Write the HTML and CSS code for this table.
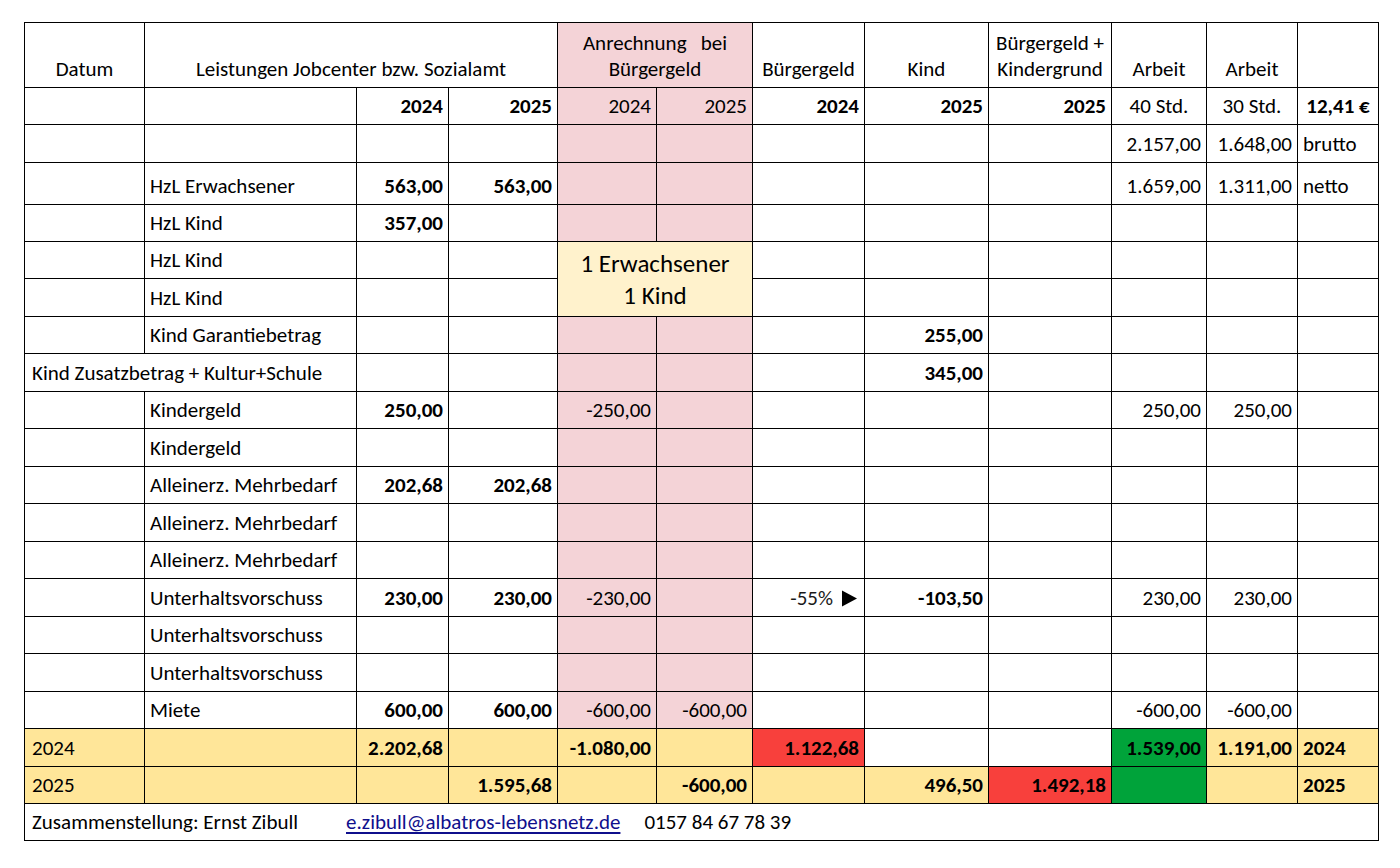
FILE: index.html
```html
<!DOCTYPE html>
<html lang="de">
<head>
<meta charset="utf-8">
<title>Leistungen Jobcenter bzw. Sozialamt</title>
<link rel="stylesheet" href="styles.css">
</head>
<body>
<table class="sheet">
  <colgroup>
    <col class="w120"><col class="w212"><col class="w92"><col class="w109"><col class="w99"><col class="w96">
    <col class="w112"><col class="w124"><col class="w123"><col class="w95"><col class="w91"><col class="w81">
  </colgroup>
  <tr class="h65 head">
    <td>Datum</td>
    <td colspan="3">Leistungen Jobcenter bzw. Sozialamt</td>
    <td colspan="2" class="pink">Anrechnung&nbsp;&nbsp; bei<br>Bürgergeld</td>
    <td>Bürgergeld</td>
    <td>Kind</td>
    <td>Bürgergeld +<br>Kindergrund</td>
    <td>Arbeit</td>
    <td>Arbeit</td>
    <td></td>
  </tr>
  <tr class="h37">
    <td></td><td></td>
    <td class="num b">2024</td><td class="num b">2025</td>
    <td class="num pink">2024</td><td class="num pink">2025</td>
    <td class="num b">2024</td><td class="num b">2025</td><td class="num b">2025</td>
    <td class="ctr">40 Std.</td><td class="ctr">30 Std.</td><td class="ctr b">12,41 €</td>
  </tr>
  <tr class="h38">
    <td></td><td></td><td></td><td></td>
    <td class="pink"></td><td class="pink"></td>
    <td></td><td></td><td></td>
    <td class="num">2.157,00</td><td class="num">1.648,00</td><td>brutto</td>
  </tr>
  <tr class="h42">
    <td></td><td>HzL Erwachsener</td>
    <td class="num b">563,00</td><td class="num b">563,00</td>
    <td class="pink"></td><td class="pink"></td>
    <td></td><td></td><td></td>
    <td class="num">1.659,00</td><td class="num">1.311,00</td><td>netto</td>
  </tr>
  <tr class="h37">
    <td></td><td>HzL Kind</td>
    <td class="num b">357,00</td><td></td>
    <td class="pink"></td><td class="pink"></td>
    <td></td><td></td><td></td><td></td><td></td><td></td>
  </tr>
  <tr class="h37">
    <td></td><td>HzL Kind</td><td></td><td></td>
    <td colspan="2" rowspan="2" class="note">1 Erwachsener<br>1 Kind</td>
    <td></td><td></td><td></td><td></td><td></td><td></td>
  </tr>
  <tr class="h38">
    <td></td><td>HzL Kind</td><td></td><td></td>
    <td></td><td></td><td></td><td></td><td></td><td></td>
  </tr>
  <tr class="h37">
    <td></td><td>Kind Garantiebetrag</td><td></td><td></td>
    <td class="pink"></td><td class="pink"></td>
    <td></td><td class="num b">255,00</td><td></td><td></td><td></td><td></td>
  </tr>
  <tr class="h38">
    <td colspan="2" class="first">Kind Zusatzbetrag + Kultur+Schule</td><td></td><td></td>
    <td class="pink"></td><td class="pink"></td>
    <td></td><td class="num b">345,00</td><td></td><td></td><td></td><td></td>
  </tr>
  <tr class="h37">
    <td></td><td>Kindergeld</td>
    <td class="num b">250,00</td><td></td>
    <td class="num pink">-250,00</td><td class="pink"></td>
    <td></td><td></td><td></td>
    <td class="num">250,00</td><td class="num">250,00</td><td></td>
  </tr>
  <tr class="h38">
    <td></td><td>Kindergeld</td><td></td><td></td>
    <td class="pink"></td><td class="pink"></td>
    <td></td><td></td><td></td><td></td><td></td><td></td>
  </tr>
  <tr class="h37">
    <td></td><td>Alleinerz. Mehrbedarf</td>
    <td class="num b">202,68</td><td class="num b">202,68</td>
    <td class="pink"></td><td class="pink"></td>
    <td></td><td></td><td></td><td></td><td></td><td></td>
  </tr>
  <tr class="h38">
    <td></td><td>Alleinerz. Mehrbedarf</td><td></td><td></td>
    <td class="pink"></td><td class="pink"></td>
    <td></td><td></td><td></td><td></td><td></td><td></td>
  </tr>
  <tr class="h37">
    <td></td><td>Alleinerz. Mehrbedarf</td><td></td><td></td>
    <td class="pink"></td><td class="pink"></td>
    <td></td><td></td><td></td><td></td><td></td><td></td>
  </tr>
  <tr class="h38">
    <td></td><td>Unterhaltsvorschuss</td>
    <td class="num b">230,00</td><td class="num b">230,00</td>
    <td class="num pink">-230,00</td><td class="pink"></td>
    <td class="num"><span class="light">-55%</span><svg class="arrow" width="17" height="17" viewBox="0 0 17 17" aria-hidden="true"><polygon points="1,0.5 16,8.5 1,16.5" fill="#000"/></svg></td>
    <td class="num b">-103,50</td><td></td>
    <td class="num">230,00</td><td class="num">230,00</td><td></td>
  </tr>
  <tr class="h37">
    <td></td><td>Unterhaltsvorschuss</td><td></td><td></td>
    <td class="pink"></td><td class="pink"></td>
    <td></td><td></td><td></td><td></td><td></td><td></td>
  </tr>
  <tr class="h38">
    <td></td><td>Unterhaltsvorschuss</td><td></td><td></td>
    <td class="pink"></td><td class="pink"></td>
    <td></td><td></td><td></td><td></td><td></td><td></td>
  </tr>
  <tr class="h37">
    <td></td><td>Miete</td>
    <td class="num b">600,00</td><td class="num b">600,00</td>
    <td class="num pink">-600,00</td><td class="num pink">-600,00</td>
    <td></td><td></td><td></td>
    <td class="num">-600,00</td><td class="num">-600,00</td><td></td>
  </tr>
  <tr class="h38">
    <td class="yel first">2024</td><td class="yel"></td>
    <td class="yel num b">2.202,68</td><td class="yel"></td>
    <td class="yel num b">-1.080,00</td><td class="yel"></td>
    <td class="red num b">1.122,68</td>
    <td></td><td></td>
    <td class="green num b">1.539,00</td><td class="yel num b">1.191,00</td><td class="yel b">2024</td>
  </tr>
  <tr class="h37">
    <td class="yel first">2025</td><td class="yel"></td>
    <td class="yel"></td><td class="yel num b">1.595,68</td>
    <td class="yel"></td><td class="yel num b">-600,00</td>
    <td class="yel"></td>
    <td class="yel num b">496,50</td><td class="red num b">1.492,18</td>
    <td class="green"></td><td class="yel"></td><td class="yel b">2025</td>
  </tr>
  <tr class="h37">
    <td colspan="12" class="foot">
      <div class="foot-line">
        <span class="author">Zusammenstellung: Ernst Zibull</span>
        <a class="mail" href="mailto:e.zibull@albatros-lebensnetz.de">e.zibull@albatros-lebensnetz.de</a>
        <span class="phone">0157 84 67 78 39</span>
      </div>
    </td>
  </tr>
</table>
</body>
</html>
```

FILE: styles.css
```css
html, body {
  margin: 0;
  background: #ffffff;
}

body {
  padding: 22px 0 0 24px;
  font-family: Carlito, Calibri, Lato, "Open Sans", sans-serif;
  font-size: 21px;
  color: #000000;
}

.sheet {
  border-collapse: collapse;
  table-layout: fixed;
  width: 1355px;
}

.w120 { width: 120px; }
.w212 { width: 212px; }
.w92  { width: 92px; }
.w109 { width: 109px; }
.w99  { width: 99px; }
.w96  { width: 96px; }
.w112 { width: 112px; }
.w124 { width: 124px; }
.w123 { width: 123px; }
.w95  { width: 95px; }
.w91  { width: 91px; }
.w81  { width: 81px; }

.h65 { height: 65px; }
.h42 { height: 42px; }
.h38 { height: 38px; }
.h37 { height: 37px; }

.sheet td {
  border: 1px solid #000000;
  padding: 0 5px 6px 5px;
  vertical-align: bottom;
  line-height: 24px;
  white-space: nowrap;
  overflow: hidden;
}

.head td {
  text-align: center;
  line-height: 26px;
  padding-bottom: 5px;
}

.sheet td.first {
  padding-left: 7px;
}

.num { text-align: right; }
.ctr { text-align: center; }
.b { font-weight: 700; }

.pink { background: #f4d3d7; }
.yel { background: #ffe699; }
.red { background: #f8403c; }
.green { background: #00a33a; }

.sheet td.note {
  background: #fff2cc;
  text-align: center;
  vertical-align: middle;
  font-size: 25px;
  line-height: 32px;
  padding: 2px 0 0 0;
}

.light {
  font-weight: 300;
  color: #1a1a1a;
}

.arrow {
  display: inline-block;
  vertical-align: -2px;
  margin-left: 8px;
  margin-right: 1px;
}

.sheet td.foot {
  padding-left: 7px;
}

.foot-line {
  display: flex;
  align-items: baseline;
}

.author { width: 314px; }

.mail {
  color: #0f0f8c;
  text-decoration: underline;
  text-underline-offset: 3px;
  margin-right: 24px;
}
```
